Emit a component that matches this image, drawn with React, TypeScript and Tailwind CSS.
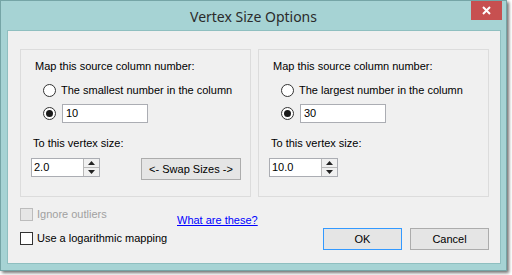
import { ReactNode } from 'react';

const ui = { fontFamily: '"Liberation Sans", Arial, sans-serif' };

function Radio({ checked }: { checked?: boolean }) {
    return (
        <span className="w-[13px] h-[13px] rounded-full border border-[#333333] bg-white flex items-center justify-center shrink-0">
            {checked && <span className="w-[7px] h-[7px] rounded-full bg-[#1a1a1a]" />}
        </span>
    );
}

function Spinner({ value }: { value: string }) {
    return (
        <div className="flex w-[69px] h-[19px] border border-[#abadb3] bg-white">
            <div className="flex-1 pl-[2px] text-[11px] leading-[17px] text-black">{value}</div>
            <div className="w-[16px] flex flex-col border-l border-[#b8b8b8] bg-[#f0f0f0]">
                <div className="flex-1 flex items-center justify-center border-b border-[#b8b8b8]">
                    <svg width="7" height="4" viewBox="0 0 7 4"><path d="M3.5 0 L7 4 L0 4 Z" fill="#222" /></svg>
                </div>
                <div className="flex-1 flex items-center justify-center">
                    <svg width="7" height="4" viewBox="0 0 7 4"><path d="M0 0 L7 0 L3.5 4 Z" fill="#222" /></svg>
                </div>
            </div>
        </div>
    );
}

function Group({ option, value, size, children }: { option: string; value: string; size: string; children?: ReactNode }) {
    return (
        <div className="w-[231px] h-[148px] border border-[#dcdcdc] pt-[10px]">
            <div className="pl-[14px] text-[11px] leading-[13px]">Map this source column number:</div>
            <div className="mt-[11px] pl-[22px] flex items-center gap-[5px] h-[13px]">
                <Radio />
                <span className="text-[11px] leading-[13px]">{option}</span>
            </div>
            <div className="mt-[7px] pl-[22px] flex items-center gap-[6px] h-[19px]">
                <Radio checked />
                <div className="w-[86px] h-[19px] border border-[#abadb3] bg-white pl-[3px] text-[11px] leading-[17px]">{value}</div>
            </div>
            <div className="mt-[14px] pl-[12px] text-[11px] leading-[13px]">To this vertex size:</div>
            <div className="mt-[8px] pl-[10px] flex items-start gap-[41px]">
                <Spinner value={size} />
                {children}
            </div>
        </div>
    );
}

function Button({ label, focused, w }: { label: string; focused?: boolean; w: string }) {
    return (
        <div
            className={`${w} h-[22px] flex items-center justify-center text-[11px] border ${
                focused ? 'border-[#3399ff] bg-[#e5e5e5]' : 'border-[#acacac] bg-[#e5e5e5]'
            }`}
        >
            {label}
        </div>
    );
}

export default function App() {
    return (
        <div className="w-[512px] h-[275px] bg-white overflow-hidden" style={ui}>
            <div className="w-[507px] h-[271px] bg-[#a6d3d4] border border-[#75a5a6] shadow-[2px_2px_3px_rgba(0,0,0,0.55)] flex flex-col">
                <div className="h-[29px] relative flex items-center justify-center">
                    <span className="text-[14px] text-[#2b2b2b] mt-[1px]" style={{ fontFamily: '"Noto Sans", "Open Sans", sans-serif' }}>
                        Vertex Size Options
                    </span>
                    <div className="absolute right-[4px] top-0 w-[31px] h-[19px] bg-[#c75050] flex items-center justify-center">
                        <svg width="9" height="9" viewBox="0 0 9 9">
                            <path d="M1 1 L8 8 M8 1 L1 8" stroke="#fff" strokeWidth="2" />
                        </svg>
                    </div>
                </div>
                <div className="ml-[6px] mr-[5px] h-[234px] border border-[#8fbfc0] bg-[#f0f0f0] text-black">
                    <div className="flex gap-[7px] pl-[12px] pt-[18px]">
                        <Group option="The smallest number in the column" value="10" size="2.0">
                            <Button label="<- Swap Sizes ->" w="w-[100px]" />
                        </Group>
                        <Group option="The largest number in the column" value="30" size="10.0" />
                    </div>
                    <div className="flex pl-[12px] pr-[11px]">
                        <div className="w-[157px] pt-[11px]">
                            <div className="flex items-center gap-[4px] h-[13px]">
                                <span className="w-[13px] h-[13px] border border-[#bcbcbc] bg-[#e6e6e6]" />
                                <span className="text-[11px] text-[#a0a0a0]">Ignore outliers</span>
                            </div>
                            <div className="mt-[11px] flex items-center gap-[4px] h-[13px]">
                                <span className="w-[13px] h-[13px] border border-[#333333] bg-white" />
                                <span className="text-[11px]">Use a logarithmic mapping</span>
                            </div>
                        </div>
                        <div className="pt-[17px] text-[11px] leading-[13px] text-[#0000ff] underline">What are these?</div>
                        <div className="flex-1" />
                        <div className="pt-[31px] flex gap-[8px]">
                            <Button label="OK" focused w="w-[79px]" />
                            <Button label="Cancel" w="w-[79px]" />
                        </div>
                    </div>
                </div>
            </div>
        </div>
    );
}
